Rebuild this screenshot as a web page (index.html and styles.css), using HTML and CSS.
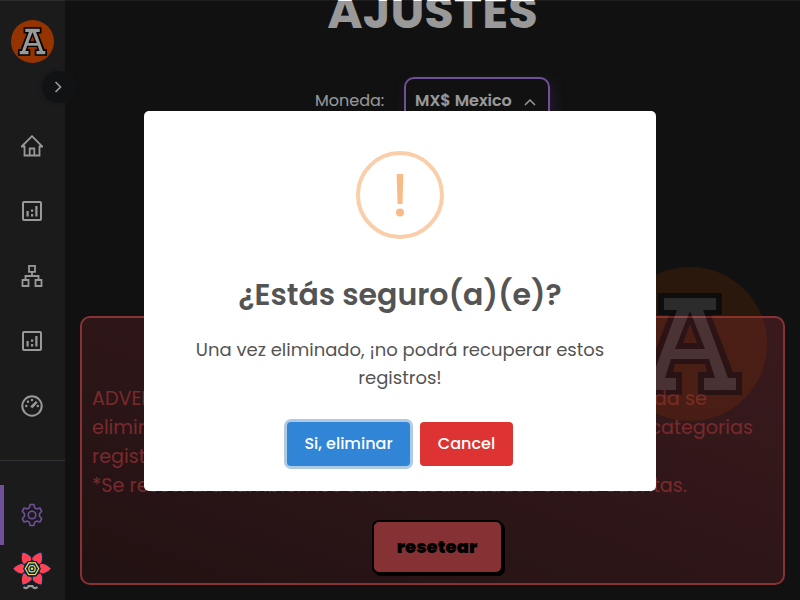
FILE: index.html
```html
<!DOCTYPE html>
<html lang="es">
<head>
<meta charset="utf-8">
<title>Ajustes</title>
<link rel="stylesheet" href="styles.css">
</head>
<body>
<svg class="defs" width="0" height="0">
  <symbol id="logo" viewBox="0 0 154 154">
    <circle cx="77" cy="77" r="77" fill="#f95700"/>
    <path fill-rule="evenodd" d="M45 26H109V48H98L120 105H129V128H85V105H94L92 97H62L60 105H69V128H25V105H34L56 48H45ZM77 57L70 76H84Z" fill="#000"/>
    <path fill-rule="evenodd" d="M51 31H103V43H90L115 111H123V123H91V111H102L96 92H58L52 111H63V123H31V111H39L64 43H51ZM77 44L62 82H92Z" fill="#fff"/>
  </symbol>
  <symbol id="chart" viewBox="0 0 20 20">
    <rect x="1" y="1" width="18" height="18" rx="1" fill="none" stroke="currentColor" stroke-width="2"/>
    <path d="M4.500 10h2.200v5.500H4.500zM9 13h2.200v2.500H9zM9 8.500h2.200v2.200H9zM13.300 5h2.200v10.500h-2.200z" fill="currentColor"/>
  </symbol>
</svg>
<div class="app">
  <aside class="sidebar">
    <div class="brand"><svg class="logo"><use href="#logo"/></svg></div>
    <nav class="menu">
      <a class="item"><svg width="22" height="22" viewBox="0 0 22 22" fill="none" stroke="currentColor" stroke-width="1.800"><path d="M.7 11.500 11 1.200l10.300 10.300H18.500V20.500H3.500V11.500ZM8.700 20V13.500h4.600V20"/></svg></a>
      <a class="item"><svg width="20" height="20"><use href="#chart"/></svg></a>
      <a class="item"><svg width="22" height="22" viewBox="0 0 22 22" fill="none" stroke="currentColor" stroke-width="1.800"><path d="M8 .9h6v6H8zM1.500 15h6v6h-6zM14.500 15h6v6h-6zM11 7v4M4.500 15v-4h13v4"/></svg></a>
      <a class="item"><svg width="20" height="20"><use href="#chart"/></svg></a>
      <a class="item"><svg width="22" height="22" viewBox="0 0 22 22"><circle cx="11" cy="11" r="9.700" fill="none" stroke="currentColor" stroke-width="2"/><path d="m9.700 11.500 5.300-5 1.100 1.100-4.600 5.200z" fill="currentColor" stroke="currentColor"/><g fill="currentColor"><circle cx="5.300" cy="11" r="1.200"/><circle cx="7" cy="6.800" r="1.200"/><circle cx="11" cy="5" r="1.200"/><circle cx="16.800" cy="11" r="1.200"/></g></svg></a>
    </nav>
    <div class="bottom">
      <a class="item active"><svg width="22" height="24" viewBox="0 -1 22 24" fill="none" stroke="currentColor" stroke-width="1.600" stroke-linejoin="round"><circle cx="11" cy="11" r="3.800"/><path d="M9.200 .5h3.600l.9 3.300 2 1.100 3.200-.9 1.800 3.300-2.200 2.400v2.600l2.200 2.400-1.800 3.300-3.200-.9-2 1.100-.9 3.300H9.200l-.9-3.300-2-1.100-3.200.9-1.800-3.300 2.200-2.400V9.700L1.300 7.300 3.100 4l3.200.9 2-1.100z"/></svg></a>
    </div>
    <span class="toggle"><svg width="8" height="12" viewBox="0 0 8 12" fill="none" stroke="currentColor" stroke-width="1.700"><path d="m1.500 1 5 5-5 5"/></svg></span>
  </aside>
  <main class="content">
    <h1 class="title">AJUSTES</h1>
    <div class="currency">
      <span class="label">Moneda:</span>
      <div class="select"><span class="value">MX$ Mexico</span><svg width="12" height="8" viewBox="0 0 12 8" fill="none" stroke="currentColor" stroke-width="1.500"><path d="m1 7 5-5 5 5"/></svg></div>
    </div>
    <section class="warning">
      <p class="warning-text">
        <span class="line l1">ADVERTENCIA: Si decide resetear, toda información guardada se</span>
        <span class="line l2">eliminarán todos los movimientos, todas las cuentas y categorias</span>
        <span class="line">registradas.</span>
        <span class="line l4">*Se reseteará también los saldos acumulados en tus cuentas.</span>
      </p>
      <button class="reset">resetear</button>
    </section>
    <svg class="watermark"><use href="#logo"/></svg>
  </main>
</div>
<div class="backdrop">
  <div class="modal" role="dialog">
    <div class="alert-icon"><svg width="12" height="43" viewBox="0 0 12 43" fill="#f8bb86"><path d="M2.700 0h6.600L8.500 30h-5z"/><circle cx="6" cy="38.500" r="4"/></svg></div>
    <h2 class="modal-title">¿Estás seguro(a)(e)?</h2>
    <div class="modal-text"><span>Una vez eliminado, ¡no podrá recuperar estos</span><span>registros!</span></div>
    <div class="actions"><button class="btn confirm">Si, eliminar</button><button class="btn cancel">Cancel</button></div>
  </div>
</div>
<svg class="devtools" viewBox="0 0 40 40">
  <path d="M11.500 37q3 2.500 5-.8h4q2 3.300 5 .8" fill="none" stroke="#999" stroke-width="2.200"/>
  <g stroke="#002c4b" stroke-width="1" fill="#ff4154">
    <path id="petal" d="M.8 18.700C4 15 8 13.300 11.300 13.200Q13 13.300 12.800 15L12.500 19 12.600 22Q12.600 24.200 10.600 24.200C7 24 3.500 22 .8 18.700Z"/>
    <use href="#petal" transform="rotate(60 20 18.700)"/><use href="#petal" transform="rotate(120 20 18.700)"/><use href="#petal" transform="rotate(180 20 18.700)"/><use href="#petal" transform="rotate(240 20 18.700)"/><use href="#petal" transform="rotate(300 20 18.700)"/>
  </g>
  <path d="M15.500 11h9l4.500 7.700-4.500 7.700h-9L11 18.700z" fill="#002c4b"/>
  <path d="M16.700 12.900h6.600l3.400 5.800-3.400 5.800h-6.600l-3.400-5.800z" fill="none" stroke="#ffd94c" stroke-width="1.200"/>
  <circle cx="20" cy="18.700" r="3.200" fill="none" stroke="#ffd94c" stroke-width="1.200"/><circle cx="20" cy="18.700" r="1.200" fill="#ffd94c"/>
</svg>
</body>
</html>
```
FILE: styles.css
```css
* { box-sizing: border-box; }
body { margin: 0; width: 800px; height: 600px; overflow: hidden; background: #1d1d1d; color: #fff; font-family: Poppins, Inter, sans-serif; }
.defs { position: absolute; }
.app { display: flex; height: 600px; }
.sidebar { position: relative; width: 65px; height: 600px; flex: none; background: #2d2d30; padding-top: 19px; color: #fff; }
.brand { display: flex; justify-content: center; align-items: flex-end; height: 44px; }
.logo { width: 43px; height: 43px; }
.menu { display: flex; flex-direction: column; padding-top: 51px; }
.item { display: flex; align-items: center; justify-content: center; height: 64.800px; padding-right: 2px; }
.bottom { margin-top: 22px; border-top: 1px solid #52525a; padding-top: 24px; }
.bottom .item { height: 60px; }
.active { color: #bb86ff; border-left: 4px solid #bb86ff; padding-right: 6px; }
.toggle { position: absolute; left: 42px; top: 71px; width: 32px; height: 32px; display: flex; align-items: center; justify-content: center; border-radius: 50%; background: #1d1f22; box-shadow: 0 0 4px #24262b; }
.content { position: relative; flex: 1; padding: 0 15px; }
.title { margin: -20px 0 0; font-size: 48px; line-height: 64px; font-weight: 700; text-align: center; }
.currency { display: flex; justify-content: center; margin-top: 33px; height: 239px; }
.label { font-size: 16px; line-height: 47px; margin-right: 19px; width: 70px; }
.select { display: flex; align-items: center; gap: 12px; width: 146px; height: 47px; padding-left: 9px; border: 2px solid #bb86ff; border-radius: 10px; box-shadow: 3px 5px 12px #3b2d51; }
.value { font-size: 16px; font-weight: 600; width: 97px; white-space: nowrap; }
.select svg { margin-top: 3px; }
.watermark { position: absolute; left: 548px; top: 267px; width: 154px; height: 154px; opacity: .2; }
.warning { height: 269px; border: 2px solid #e35458; border-radius: 10px; background: linear-gradient(to top right, #391e20, #612c30); padding: 66px 10px 0; }
.warning-text { margin: 0; color: #c9464a; font-size: 19.200px; line-height: 29px; }
.line { display: block; white-space: nowrap; text-align-last: justify; width: max-content; }
.l1 { width: 615px; white-space: normal; height: 29px; }
.l2 { width: 661px; white-space: normal; height: 29px; }
.l4 { letter-spacing: -.01px; }
.reset { display: block; margin: 20px 0 0 280px; width: 131px; height: 54px; border: 2px solid #000; border-radius: 7px; background: #e05458; box-shadow: 2px 2px 0 #000; font: 900 18px Poppins, Inter, sans-serif; padding: 0 1px 2px 0; }
.backdrop { position: absolute; top: 1px; left: 0; width: 800px; height: 599px; background: rgba(0,0,0,.4); display: flex; justify-content: center; padding-top: 110px; }
.modal { width: 512px; height: 380px; background: #fff; border-radius: 5px; color: #545454; padding-top: 40px; text-align: center; }
.alert-icon { width: 88px; height: 88px; margin: 0 auto; border: 4px solid #facea8; border-radius: 50%; display: flex; align-items: center; justify-content: center; }
.modal-title { margin: 33px 0 0; font-size: 30px; line-height: 45px; font-weight: 600; }
.modal-text { margin-top: 19px; font-size: 18px; line-height: 28px; }
.modal-text span { display: block; }
.actions { display: flex; justify-content: center; gap: 10px; margin-top: 30px; }
.btn { height: 44px; border: 0; border-radius: 4px; padding: 0 0 2px; color: #fff; font: 500 16px Poppins, Inter, sans-serif; }
.confirm { width: 123px; background: #3085d6; box-shadow: 0 0 0 3px #afcae5; }
.cancel { width: 93px; background: #d33; }
.devtools { position: absolute; left: 12px; top: 550px; width: 40px; height: 40px; }
```
